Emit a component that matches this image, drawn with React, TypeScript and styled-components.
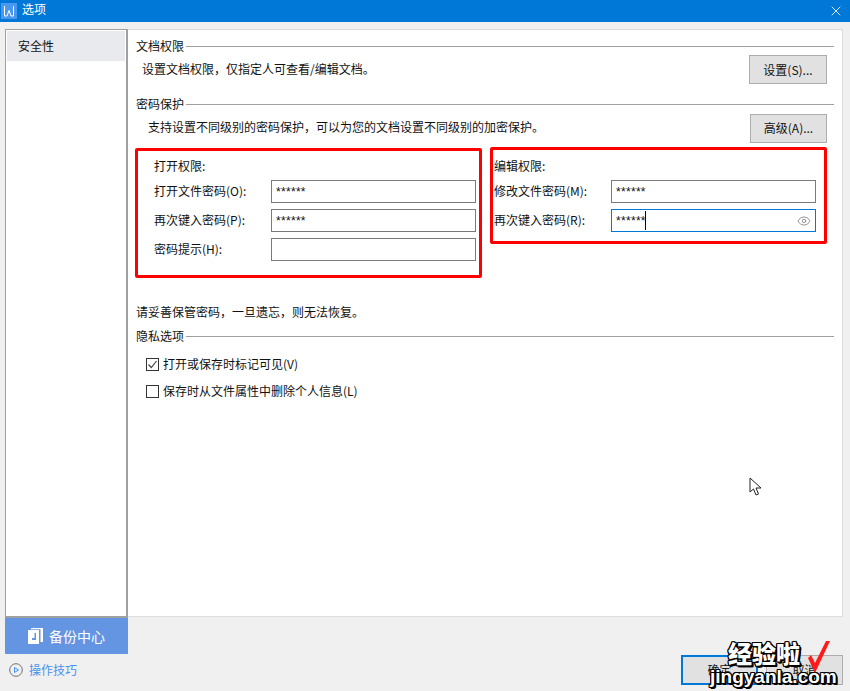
import React from 'react';
import styled, { createGlobalStyle } from 'styled-components';
import { Eye, X } from 'lucide-react';

const GlobalStyle = createGlobalStyle`
  html, body {
    margin: 0;
    padding: 0;
    background: #F0F0F0;
  }
  * {
    box-sizing: border-box;
  }
`;

const Page = styled.div`
  position: relative;
  width: 850px;
  height: 691px;
  overflow: hidden;
  background: #F0F0F0;
  color: #111111;
  font-family: "Noto Sans CJK SC", "Liberation Sans", sans-serif;
  font-size: 12px;
  line-height: 16px;
`;

const TitleBar = styled.div`
  height: 22px;
  background: #0078D7;
  color: #FFFFFF;
  display: flex;
  align-items: center;
  padding: 0 6px 0 1px;
  gap: 5px;
`;

const AppLogo = styled.div`
  width: 16px;
  height: 16px;
  background: #4A98F0;
  display: flex;
  align-items: center;
  justify-content: center;
`;

const TitleText = styled.span`
  flex: 1;
  padding-bottom: 4px;
`;

const Body = styled.div`
  display: flex;
  padding: 7px 7px 0 5px;
`;

const LeftColumn = styled.div`
  width: 123px;
  display: flex;
  flex-direction: column;
`;

const SideList = styled.div`
  height: 589px;
  background: #FFFFFF;
  border: 1px solid #A0A0A0;
  border-bottom-width: 2px;
  border-right-width: 2px;
  padding: 1px;
`;

const SideItem = styled.div`
  height: 30px;
  background: #E8EAEE;
  padding-left: 11px;
  display: flex;
  align-items: center;
`;

const BackupButton = styled.div`
  height: 36px;
  background: #6495E2;
  color: #FFFFFF;
  font-size: 14px;
  display: flex;
  align-items: center;
  justify-content: center;
  gap: 6px;
`;

const Tips = styled.div`
  display: flex;
  align-items: center;
  gap: 6px;
  padding: 8px 0 0 4px;
  color: #4A90F0;
`;

const RightColumn = styled.div`
  width: 715px;
  display: flex;
  flex-direction: column;
`;

const MainPanel = styled.div`
  height: 588px;
  background: #FFFFFF;
  border: 1px solid #DDDDDD;
  border-left: none;
  padding: 8px 8px 0 8px;
`;

const SectionTitle = styled.div<{ $top?: number }>`
  display: flex;
  align-items: center;
  gap: 2px;
  margin-top: ${(p) => p.$top ?? 0}px;

  &::after {
    content: '';
    flex: 1;
    height: 1px;
    background: #A0A0A0;
  }
`;

const DescRow = styled.div<{ $indent: number; $height: number }>`
  display: flex;
  align-items: center;
  justify-content: space-between;
  height: ${(p) => p.$height}px;
  padding-left: ${(p) => p.$indent}px;
  padding-right: 7px;
`;

const Button = styled.div<{ $primary?: boolean; $width?: number }>`
  width: ${(p) => p.$width ?? 77}px;
  height: 30px;
  background: #E1E1E1;
  border: ${(p) => (p.$primary ? '2px solid #0078D7' : '1px solid #ADADAD')};
  display: flex;
  align-items: center;
  justify-content: center;
`;

const ActionButton = styled(Button)`
  height: 29px;
  margin-top: 2px;
`;

const Annotated = styled.div`
  display: flex;
  align-items: flex-start;
  gap: 8px;
  margin: 5px 0 0 -1px;
`;

const RedBox = styled.div<{ $width: number; $height: number; $pad: number; $top: number; $padTop: number }>`
  width: ${(p) => p.$width}px;
  height: ${(p) => p.$height}px;
  margin-top: ${(p) => p.$top}px;
  border: 3px solid #FF0000;
  border-radius: 2px;
  padding: ${(p) => p.$padTop}px 0 0 ${(p) => p.$pad}px;
`;

const GroupTitle = styled.div`
  height: 16px;
  margin-bottom: 6px;
`;

const FieldRow = styled.div`
  display: grid;
  grid-template-columns: 117px 205px;
  align-items: center;
  height: 23px;
  margin-bottom: 6px;
`;

const FieldLabel = styled.span`
  margin-bottom: 2px;
`;

const Field = styled.div<{ $focused?: boolean }>`
  height: 23px;
  background: #FFFFFF;
  border: 1px solid ${(p) => (p.$focused ? '#0078D7' : '#7A7A7A')};
  padding: 0 4px;
  display: flex;
  align-items: center;
  justify-content: space-between;
  letter-spacing: 0.3px;
`;

const Caret = styled.span`
  display: inline-block;
  width: 1px;
  height: 19px;
  margin-left: -1px;
  background: #000000;
`;

const FieldValue = styled.span`
  display: flex;
  align-items: center;
  font-family: "Liberation Sans", sans-serif;
  font-size: 12px;
`;

const Notice = styled.div`
  margin-top: 26px;
`;

const CheckRow = styled.div<{ $top: number }>`
  display: flex;
  align-items: center;
  gap: 4px;
  margin: ${(p) => p.$top}px 0 0 10px;
`;

const CheckBox = styled.div`
  width: 13px;
  height: 13px;
  border: 1px solid #333333;
  background: #FFFFFF;
  display: flex;
  align-items: center;
  justify-content: center;
`;

const Footer = styled.div`
  display: flex;
  justify-content: flex-end;
  gap: 8px;
  padding-top: 38px;
`;

const Watermark = styled.div`
  position: absolute;
  left: 706px;
  top: 638px;
  width: 140px;
  color: #FFFFFF;
  font-weight: 900;
  font-family: "Noto Sans CJK SC", sans-serif;
  text-shadow: -1px -1px 0 #000, 0 -1px 0 #000, 1px -1px 0 #000, -1px 0 0 #000, 1px 0 0 #000, -1px 1px 0 #000, 0 1px 0 #000, 1px 1px 0 #000, 2px 2px 0 #000, 2px 1px 0 #000, 1px 2px 0 #000;
`;

const WatermarkCn = styled.div`
  font-size: 24px;
  line-height: 29px;
  padding-left: 22px;
`;

const WatermarkEn = styled.div`
  font-family: "Liberation Sans", sans-serif;
  font-size: 19px;
  line-height: 20px;
  padding-left: 4px;
`;

const WatermarkCheck = styled.svg`
  position: absolute;
  left: 99px;
  top: 0;
`;

const Pointer = styled.svg`
  position: absolute;
  left: 749px;
  top: 477px;
`;

const App: React.FC = () => {
  return (
    <Page>
      <GlobalStyle />
      <TitleBar>
        <AppLogo>
          <svg width="12" height="12" viewBox="0 0 12 12" fill="none" stroke="#FFFFFF" strokeWidth="1">
            <path d="M1.500 1v10h2.500L6 5.500 8 11h2.500V1" />
          </svg>
        </AppLogo>
        <TitleText>选项</TitleText>
        <X size={16} color="#FFFFFF" strokeWidth={1.3} />
      </TitleBar>
      <Body>
        <LeftColumn>
          <SideList>
            <SideItem>安全性</SideItem>
          </SideList>
          <BackupButton>
            <svg width="15" height="16" viewBox="0 0 15 16" fill="#FFFFFF">
              <path d="M0 2h11v14H0z M4 10v2h4V5H6.500v5z" fillRule="evenodd" />
              <path d="M3 0h12v14h-2.500V1.200H3z" />
            </svg>
            备份中心
          </BackupButton>
          <Tips>
            <svg width="14" height="14" viewBox="0 0 14 14" fill="none">
              <circle cx="7" cy="7" r="6.300" stroke="#707070" />
              <path d="M5.500 4.500L9.500 7l-4 2.500z" stroke="#4A90F0" />
            </svg>
            操作技巧
          </Tips>
        </LeftColumn>
        <RightColumn>
          <MainPanel>
            <SectionTitle>文档权限</SectionTitle>
            <DescRow $indent={6} $height={29}>
              设置文档权限，仅指定人可查看/编辑文档。
              <ActionButton $width={78}>设置(S)...</ActionButton>
            </DescRow>
            <SectionTitle $top={13}>密码保护</SectionTitle>
            <DescRow $indent={12} $height={30}>
              支持设置不同级别的密码保护，可以为您的文档设置不同级别的加密保护。
              <ActionButton $width={77}>高级(A)...</ActionButton>
            </DescRow>
            <Annotated>
              <RedBox $width={347} $height={130} $pad={16} $top={1} $padTop={7}>
                <GroupTitle>打开权限:</GroupTitle>
                <FieldRow>
                  <FieldLabel>打开文件密码(O):</FieldLabel>
                  <Field>
                    <FieldValue>******</FieldValue>
                  </Field>
                </FieldRow>
                <FieldRow>
                  <FieldLabel>再次键入密码(P):</FieldLabel>
                  <Field>
                    <FieldValue>******</FieldValue>
                  </Field>
                </FieldRow>
                <FieldRow>
                  <FieldLabel>密码提示(H):</FieldLabel>
                  <Field />
                </FieldRow>
              </RedBox>
              <RedBox $width={337} $height={97} $pad={1} $top={0} $padTop={8}>
                <GroupTitle>编辑权限:</GroupTitle>
                <FieldRow>
                  <FieldLabel>修改文件密码(M):</FieldLabel>
                  <Field>
                    <FieldValue>******</FieldValue>
                  </Field>
                </FieldRow>
                <FieldRow>
                  <FieldLabel>再次键入密码(R):</FieldLabel>
                  <Field $focused>
                    <FieldValue>
                      ******
                      <Caret />
                    </FieldValue>
                    <Eye size={14} color="#808080" strokeWidth={1.4} />
                  </Field>
                </FieldRow>
              </RedBox>
            </Annotated>
            <Notice>请妥善保管密码，一旦遗忘，则无法恢复。</Notice>
            <SectionTitle $top={8}>隐私选项</SectionTitle>
            <CheckRow $top={12}>
              <CheckBox>
                <svg width="11" height="11" viewBox="0 0 11 11" fill="none" stroke="#444444" strokeWidth="1.200">
                  <path d="M1.500 5.500L4.300 8.500L9.500 2" />
                </svg>
              </CheckBox>
              打开或保存时标记可见(V)
            </CheckRow>
            <CheckRow $top={11}>
              <CheckBox />
              保存时从文件属性中删除个人信息(L)
            </CheckRow>
          </MainPanel>
          <Footer>
            <Button $primary>确定</Button>
            <Button>取消</Button>
          </Footer>
        </RightColumn>
      </Body>
      <Pointer width="14" height="20" viewBox="0 0 14 20" fill="#FFFFFF" stroke="#222222" strokeWidth="1">
        <path d="M1 1v14l3.500-3 2.500 6 2.500-1-2.500-6H12z" />
      </Pointer>
      <Watermark>
        <WatermarkCn>经验啦</WatermarkCn>
        <WatermarkEn>jingyanla.com</WatermarkEn>
        <WatermarkCheck width="26" height="36" viewBox="0 0 26 36" fill="#FF1A1A">
          <path d="M3 20L6 17L10 25L21 3H25L10 35z" />
        </WatermarkCheck>
      </Watermark>
    </Page>
  );
};

export default App;
